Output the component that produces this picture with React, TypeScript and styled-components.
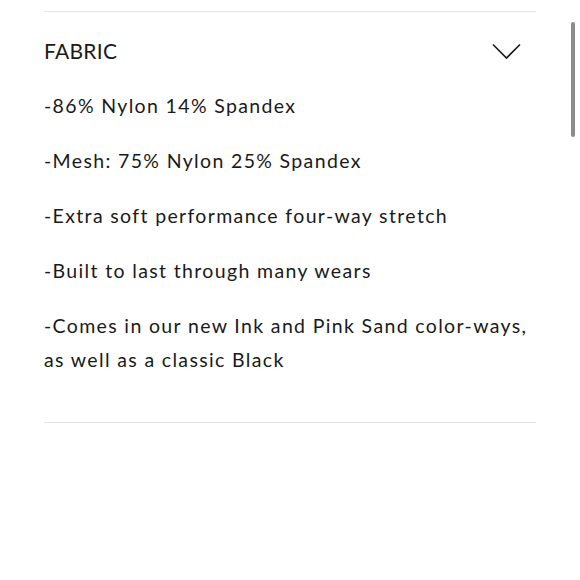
import React from 'react'
import styled, { createGlobalStyle } from 'styled-components'

const GlobalStyle = createGlobalStyle`
  html, body {
    margin: 0;
    padding: 0;
    background: #fff;
  }
  body {
    font-family: Lato, "Noto Sans", sans-serif;
    color: #1a1a1a;
  }
`

const items = [
  '-86% Nylon 14% Spandex',
  '-Mesh: 75% Nylon 25% Spandex',
  '-Extra soft performance four-way stretch',
  '-Built to last through many wears',
  '-Comes in our new Ink and Pink Sand color-ways, as well as a classic Black',
]

export default function App() {
  return (
    <>
      <GlobalStyle />
      <Page>
        <Section>
          <Header>
            <Title>FABRIC</Title>
            <Chevron width="29" height="17" viewBox="0 0 29 17">
              <path d="M1 1.5 L14.5 15 L28 1.5" fill="none" stroke="#1a1a1a" strokeWidth="1.6" />
            </Chevron>
          </Header>
          <List>
            {items.map((s, i) => (
              <Item key={i}>{s}</Item>
            ))}
          </List>
        </Section>
        <Scrollbar />
      </Page>
    </>
  )
}

const Page = styled.div`
  position: relative;
  width: 580px;
  height: 580px;
  padding: 11px 44px 0 44px;
  box-sizing: border-box;
`
const Section = styled.div`
  border-top: 1px solid #e6e6e6;
  border-bottom: 1px solid #e6e6e6;
  padding-bottom: 45px;
`
const Header = styled.div`
  display: flex;
  align-items: center;
  justify-content: space-between;
  height: 77px;
`
const Title = styled.h2`
  margin: 0;
  font-size: 21px;
  font-weight: 400;
  letter-spacing: 0.3px;
`
const Chevron = styled.svg`
  margin-right: 15px;
  margin-top: 1px;
`
const List = styled.div`
  display: flex;
  flex-direction: column;
  gap: 21px;
`
const Item = styled.p`
  margin: 0;
  font-size: 19.5px;
  line-height: 34px;
  letter-spacing: 1.35px;
  max-width: 490px;
`
const Scrollbar = styled.div`
  position: absolute;
  top: 22px;
  right: 5px;
  width: 4px;
  height: 115px;
  border-radius: 2px;
  background: #8c8c8c;
`
